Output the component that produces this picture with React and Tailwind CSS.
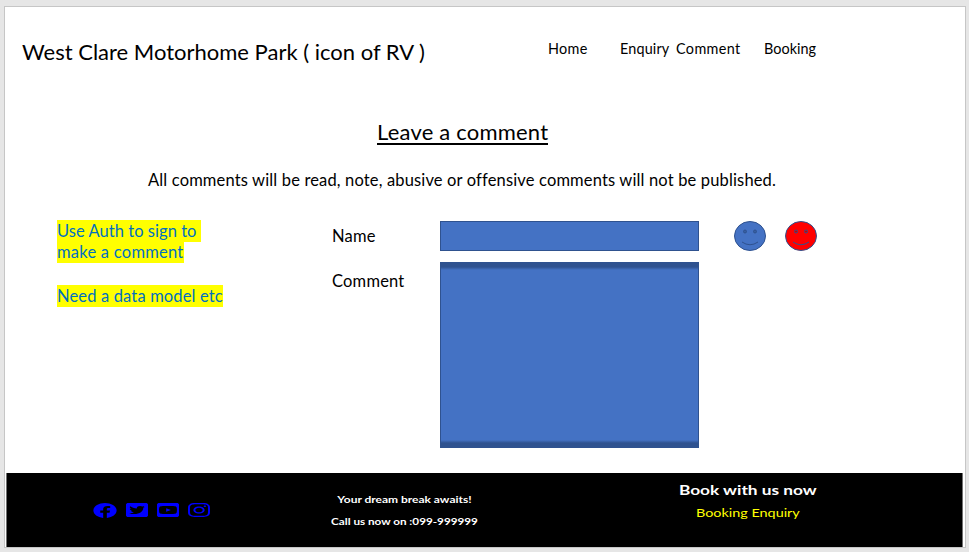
import { FaFacebook, FaTwitterSquare, FaYoutubeSquare, FaInstagram } from "react-icons/fa";

const navItems = [
  { label: "Home", box: "w-[72px] tracking-[0.35px]" },
  { label: "Enquiry", box: "w-[56px]" },
  { label: "Comment", box: "w-[88px] tracking-[0.38px]" },
  { label: "Booking", box: "w-[60px] tracking-[0.05px]" },
];

const socials = [
  { Icon: FaFacebook, box: "0 8 512 496", size: "h-[15px] w-[24px]", gap: "mr-[9px]" },
  { Icon: FaTwitterSquare, box: "0 32 448 448", size: "h-[14px] w-[22px]", gap: "mr-[9px]" },
  { Icon: FaYoutubeSquare, box: "0 32 448 448", size: "h-[14px] w-[22px]", gap: "mr-[9px]" },
  { Icon: FaInstagram, box: "0 32 448 448", size: "h-[14px] w-[22px]", gap: "" },
];

function Smiley({ face, eye }) {
  return (
    <svg className="h-[30px] w-[32px]" viewBox="0 0 32 30" fill="none" stroke="#2f528f">
      <ellipse cx="16" cy="15" rx="15.5" ry="14.5" className={face} />
      <circle cx="11" cy="10.5" r="1.5" className={eye} />
      <circle cx="21" cy="10.5" r="1.5" className={eye} />
      <path d="M8 21Q16 26.5 24 21" />
    </svg>
  );
}

export default function App() {
  return (
    <div className="h-[552px] w-[969px] overflow-hidden bg-[#e6e6e6] pt-[6px] pl-[4px] font-['Lato',sans-serif] text-black">
      <div className="flex h-[542px] w-[962px] flex-col border border-[#c6c6c6] bg-white">
        <header className="flex h-[92px] pl-[17px]">
          <h1 className="mt-[30px] w-[526px] text-[22px] leading-[30px] whitespace-nowrap">
            West Clare Motorhome Park ( icon of RV )
          </h1>
          <nav className="mt-[32px] flex text-[14.4px] leading-[20px] tracking-[0.15px]">
            {navItems.map((n) => (
              <a key={n.label} className={n.box}>{n.label}</a>
            ))}
          </nav>
        </header>

        <h2 className="mt-[19px] ml-[372px] h-[28px] text-[22px] leading-[28px] tracking-[0.2px] whitespace-nowrap">
          <span className="inline-block h-[27px] border-b-2 border-black">Leave a comment</span>
        </h2>
        <p className="mt-[23px] ml-[143px] h-[22px] text-[16.5px] leading-[22px] tracking-[0.15px] whitespace-nowrap">
          All comments will be read, note, abusive or offensive comments will not be published.
        </p>

        <main className="mt-[29px] flex h-[253px] pl-[52px] text-[16.5px]">
          <aside className="w-[275px] leading-[22px] tracking-[0.15px] whitespace-nowrap text-[#0070c0]">
            <div className="h-[22px]"><span className="inline-block h-[22px] w-[144px] bg-[#ffff00] pt-px leading-[21px] tracking-[0.05px]">Use Auth to sign to</span></div>
            <div className="h-[21px] leading-[21px]"><span className="inline-block h-[21px] bg-[#ffff00] tracking-[0.25px]">make a comment</span></div>
            <div className="mt-[22px] h-[22px]"><span className="inline-block h-[22px] bg-[#ffff00]">Need a data model etc</span></div>
          </aside>
          <div className="w-[108px] leading-[22px] tracking-[0.2px]">
            <div className="mt-[5px]">Name</div>
            <div className="mt-[23px]">Comment</div>
          </div>
          <div className="w-[259px]">
            <div className="mt-[1px] h-[30px] border border-[#2f528f] bg-[#4472c4]" />
            <div className="mt-[11px] h-[186px] border border-[#2f528f] bg-[linear-gradient(to_bottom,#2f528f_4px,#4472c4_7px,#4472c4_177px,#2f528f_180px)]" />
          </div>
          <div className="mt-[1px] ml-[35px] flex gap-[19px]">
            <Smiley face="fill-[#4472c4]" eye="fill-[#375fa3]" />
            <Smiley face="fill-[#ff0000]" eye="fill-[#cd0000]" />
          </div>
        </main>

        <footer className="mt-auto mr-[2px] ml-[1px] flex h-[74px] border-x border-[#707070] bg-black text-white">
          <div className="flex w-[323px] items-center pl-[86px] text-[#0000ff]">
            {socials.map(({ Icon, box, size, gap }, i) => (
              <Icon key={i} viewBox={box} preserveAspectRatio="none" className={`${size} ${gap}`} />
            ))}
          </div>
          <div className="w-[148px] pt-[19px] text-center text-[9px] leading-[16px] font-bold whitespace-nowrap">
            <div><span className="inline-block scale-x-[1.33]">Your dream break awaits!</span></div>
            <div className="mt-[6px]"><span className="inline-block scale-x-[1.3]">Call us now on :099-999999</span></div>
          </div>
          <div className="ml-[201px] w-[138px] pt-[8px] text-center whitespace-nowrap">
            <div className="text-[13px] leading-[18px] font-bold"><span className="inline-block scale-x-[1.33]">Book with us now</span></div>
            <div className="mt-[7px] text-[10.5px] leading-[15px] text-[#ffff00]"><span className="inline-block scale-x-[1.37]">Booking Enquiry</span></div>
          </div>
        </footer>
      </div>
    </div>
  );
}
